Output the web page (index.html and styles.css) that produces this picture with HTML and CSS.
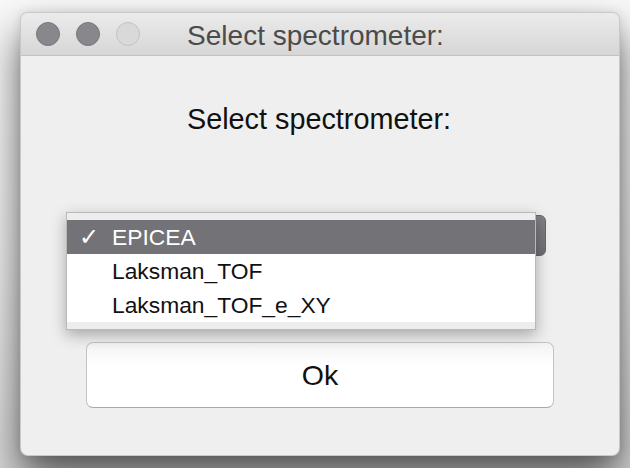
FILE: index.html
```html
<!DOCTYPE html>
<html>
<head>
<meta charset="utf-8">
<link rel="stylesheet" href="styles.css">
</head>
<body>
<div class="window">
  <div class="titlebar">
    <div class="lights">
      <span class="light dark"></span>
      <span class="light dark"></span>
      <span class="light off"></span>
    </div>
    <div class="title">Select spectrometer:</div>
  </div>
  <div class="content">
    <div class="heading">Select spectrometer:</div>
    <div class="combo-wrap">
      <div class="combo">
        <svg class="chev" width="12" height="22" viewBox="0 0 12 22"><path d="M2 8 L6 4 L10 8 M2 14 L6 18 L10 14" fill="none" stroke="#86858a" stroke-width="1.5"/></svg>
      </div>
      <div class="menu">
        <div class="item selected"><span class="check">✓</span>EPICEA</div>
        <div class="item"><span class="check"></span>Laksman_TOF</div>
        <div class="item"><span class="check"></span>Laksman_TOF_e_XY</div>
      </div>
    </div>
    <div class="button">Ok</div>
  </div>
</div>
</body>
</html>
```
FILE: styles.css
```css
html, body {
  margin: 0;
  padding: 0;
}
body {
  width: 630px;
  height: 468px;
  overflow: hidden;
  background: linear-gradient(to bottom, #f8f8f8 0%, #eeeeee 55%, #d8d8d8 100%);
  font-family: "Liberation Sans", Arial, sans-serif;
}
.window {
  box-sizing: border-box;
  width: 600px;
  height: 444px;
  margin: 12px 0 0 20px;
  border: 1px solid rgba(0, 0, 0, 0.16);
  border-radius: 8px;
  background: #efefef;
  overflow: hidden;
  box-shadow: 0 22px 40px rgba(0, 0, 0, 0.62), 0 0 10px rgba(0, 0, 0, 0.1);
  display: flex;
  flex-direction: column;
}
.titlebar {
  height: 42px;
  border-bottom: 1px solid #c2c2c2;
  background: linear-gradient(to bottom, #ebebeb, #d6d6d6);
  display: grid;
  align-items: center;
  flex: none;
}
.lights, .title {
  grid-area: 1 / 1;
}
.lights {
  display: flex;
  gap: 16px;
  padding-left: 15px;
  align-self: center;
}
.light {
  box-sizing: border-box;
  width: 24px;
  height: 24px;
  border-radius: 50%;
}
.light.dark {
  background: #88878c;
  border: 1px solid #77767b;
}
.light.off {
  background: #d9d9d9;
  border: 1px solid #c3c3c3;
}
.title {
  justify-self: center;
  padding-right: 9px;
  padding-top: 3px;
  font-size: 28px;
  line-height: 32px;
  color: #4b4b4b;
}
.content {
  flex: 1;
  display: flex;
  flex-direction: column;
  align-items: flex-start;
}
.heading {
  align-self: stretch;
  margin-top: 47px;
  padding-right: 2px;
  text-align: center;
  font-size: 28.8px;
  line-height: 32px;
  color: #111;
}
.combo-wrap {
  position: relative;
  margin-top: 80px;
  margin-left: 45px;
  width: 480px;
  height: 41px;
}
.combo {
  box-sizing: border-box;
  width: 100%;
  height: 100%;
  border-radius: 6px;
  background: linear-gradient(to bottom, #828186, #6f6e73);
  border: 1px solid #66656a;
  display: flex;
  align-items: center;
  justify-content: flex-end;
  padding-right: 14px;
}
.menu {
  position: absolute;
  left: 0;
  top: -3px;
  box-sizing: border-box;
  width: 470px;
  height: 118px;
  padding: 7px 0;
  background: #ededed;
  border: 1px solid #b9b9b9;
  box-shadow: 0 5px 14px rgba(0, 0, 0, 0.3);
}
.item {
  height: 34px;
  line-height: 34px;
  font-size: 22.8px;
  color: #111;
  background: #ffffff;
  display: flex;
}
.item.selected {
  background: #737277;
  color: #ffffff;
}
.check {
  width: 33px;
  padding-left: 12px;
  font-size: 24px;
  font-family: "DejaVu Sans", sans-serif;
}
.button {
  box-sizing: border-box;
  margin-top: 86px;
  margin-left: 65px;
  width: 468px;
  height: 66px;
  border: 1px solid #c3c3c3;
  border-bottom-color: #a9a9a9;
  border-radius: 7px;
  background: linear-gradient(to bottom, #f3f3f3 0%, #ffffff 35%, #ffffff 100%);
  display: flex;
  align-items: center;
  justify-content: center;
  font-size: 28.5px;
  line-height: 32px;
  color: #111;
}
```
